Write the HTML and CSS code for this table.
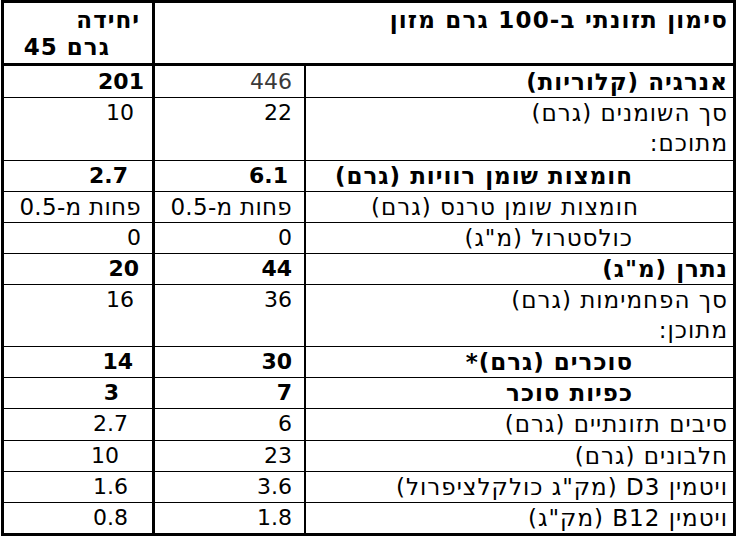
FILE: index.html
```html
<!DOCTYPE html>
<html lang="he" dir="rtl">
<head>
<meta charset="utf-8">
<title>סימון תזונתי</title>
<link rel="stylesheet" href="styles.css">
</head>
<body>
<table class="nutri">
  <colgroup>
    <col class="c-label">
    <col class="c-per">
    <col class="c-unit">
  </colgroup>
  <tr class="head">
    <td class="h-main" colspan="2">סימון תזונתי ב-100 גרם מזון</td>
    <td class="h-unit"><span class="h-line">יחידה</span><span class="h-line h-line2">גרם 45</span></td>
  </tr>
  <tr class="first">
    <td class="label bold">אנרגיה (קלוריות)</td>
    <td class="per light">446</td>
    <td class="unit bold pad-8">201</td>
  </tr>
  <tr class="double taller">
    <td class="label">סך השומנים (גרם)<br>מתוכם:</td>
    <td class="per">22</td>
    <td class="unit pad-18">10</td>
  </tr>
  <tr>
    <td class="label bold indent">חומצות שומן רוויות (גרם)</td>
    <td class="per bold per-16">6.1</td>
    <td class="unit bold pad-24">2.7</td>
  </tr>
  <tr>
    <td class="label indent-trans">חומצות שומן טרנס (גרם)</td>
    <td class="per heb">פחות מ-0.5</td>
    <td class="unit heb pad-11">פחות מ-0.5</td>
  </tr>
  <tr>
    <td class="label indent">כולסטרול (מ"ג)</td>
    <td class="per">0</td>
    <td class="unit pad-11">0</td>
  </tr>
  <tr>
    <td class="label bold">נתרן (מ"ג)</td>
    <td class="per bold">44</td>
    <td class="unit bold pad-13">20</td>
  </tr>
  <tr class="double">
    <td class="label">סך הפחמימות (גרם)<br>מתוכן:</td>
    <td class="per">36</td>
    <td class="unit pad-18">16</td>
  </tr>
  <tr>
    <td class="label bold indent">סוכרים (גרם)*</td>
    <td class="per bold">30</td>
    <td class="unit bold pad-19">14</td>
  </tr>
  <tr>
    <td class="label bold indent">כפיות סוכר</td>
    <td class="per bold">7</td>
    <td class="unit bold pad-33">3</td>
  </tr>
  <tr class="taller">
    <td class="label">סיבים תזונתיים (גרם)</td>
    <td class="per">6</td>
    <td class="unit pad-24">2.7</td>
  </tr>
  <tr>
    <td class="label">חלבונים (גרם)</td>
    <td class="per">23</td>
    <td class="unit pad-33">10</td>
  </tr>
  <tr>
    <td class="label">ויטמין D3 (מק"ג כולקלציפרול)</td>
    <td class="per">3.6</td>
    <td class="unit pad-24">1.6</td>
  </tr>
  <tr class="last">
    <td class="label">ויטמין B12 (מק"ג)</td>
    <td class="per">1.8</td>
    <td class="unit pad-24">0.8</td>
  </tr>
</table>
</body>
</html>
```
FILE: styles.css
```css
html, body {
  margin: 0;
  padding: 0;
  background: #fff;
}

body {
  font-family: "DejaVu Sans", Verdana, sans-serif;
  color: #000;
}

.nutri {
  direction: rtl;
  margin: 0 auto 0 1px;
  width: 735px;
  box-sizing: border-box;
  border: 3px solid #000;
  border-spacing: 0;
  table-layout: fixed;
  font-size: 22px;
}

.c-label { width: 427px; }
.c-per { width: 151px; }
.c-unit { width: 151px; }

.nutri td {
  box-sizing: border-box;
  padding: 0;
  vertical-align: top;
  line-height: 30px;
  text-align: right;
  border-bottom: 1px solid #000;
  white-space: nowrap;
}

.nutri tr.last td {
  border-bottom: none;
}

.head td {
  border-bottom: 3px solid #000;
  font-weight: bold;
  font-size: 23px;
  line-height: 27px;
  height: 63px;
  padding-top: 4px;
  letter-spacing: 1px;
}

.h-main {
  padding-right: 5px !important;
  letter-spacing: 1.2px !important;
}

.h-unit {
  border-right: 3px solid #000;
  padding-right: 12px !important;
}

.h-line {
  display: block;
}

.h-line2 {
  padding-right: 30px;
}

.label {
  padding-right: 5px !important;
  font-size: 23px;
  letter-spacing: 1px;
}

.heb {
  font-size: 23px;
  letter-spacing: 0.3px;
}

.per {
  border-right: 2px solid #000;
  padding-right: 12px !important;
}

.unit {
  border-right: 3px solid #000;
}

.first td {
  padding-top: 1px;
}

.double td {
  padding-bottom: 1px;
}

.double.taller td {
  padding-bottom: 2px;
}

.taller td {
  padding-bottom: 1px;
}

.bold {
  font-weight: bold;
}

.light {
  color: #3a3a3a;
}

.indent {
  padding-right: 100px !important;
}

.indent-trans {
  padding-right: 94px !important;
}

.per-16 {
  padding-right: 16px !important;
}

.pad-8 { padding-right: 8px !important; }
.pad-11 { padding-right: 11px !important; }
.pad-13 { padding-right: 13px !important; }
.pad-18 { padding-right: 18px !important; }
.pad-19 { padding-right: 19px !important; }
.pad-24 { padding-right: 24px !important; }
.pad-33 { padding-right: 33px !important; }
```
